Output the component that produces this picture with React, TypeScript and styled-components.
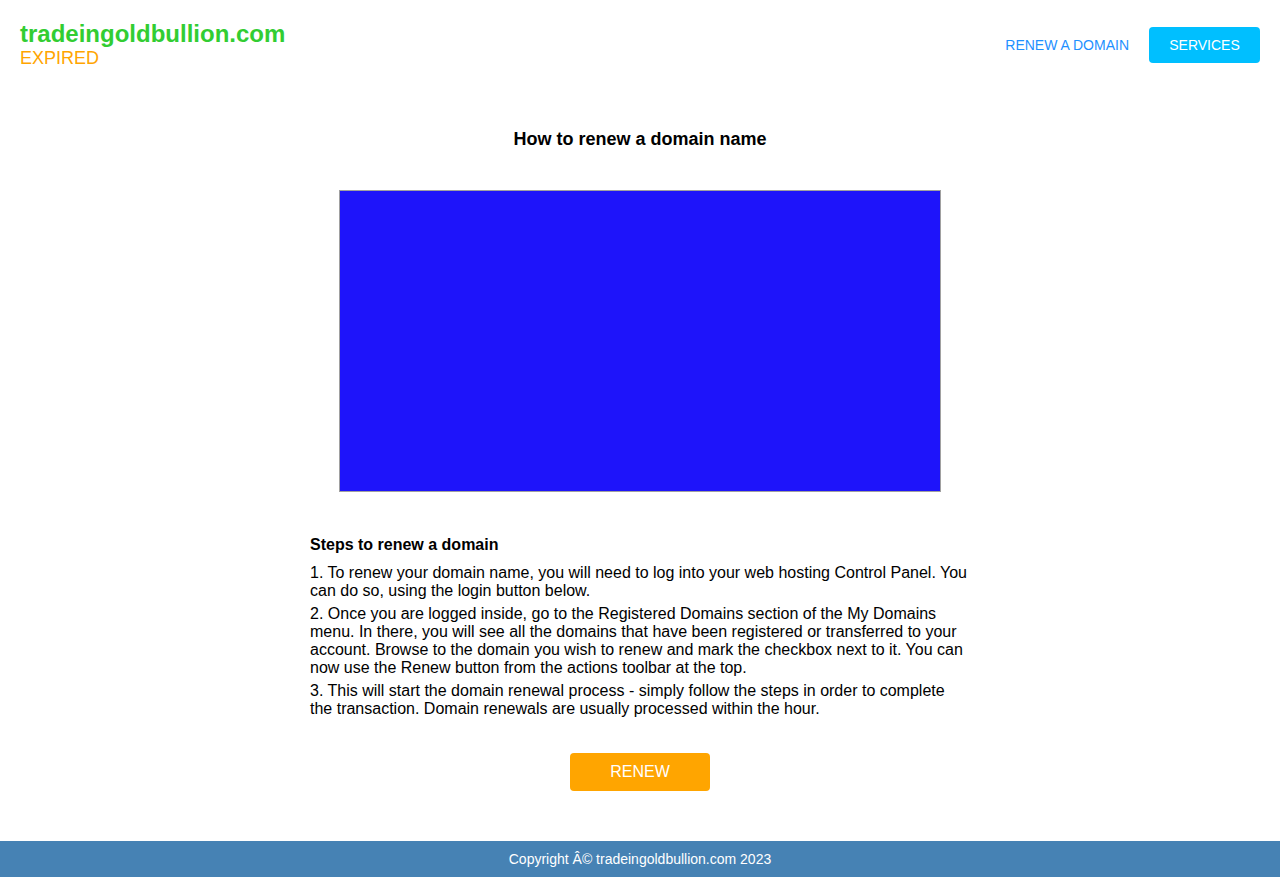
import React from "react";
import styled, { createGlobalStyle } from "styled-components";

const Global = createGlobalStyle`
  html, body { margin: 0; padding: 0; background: #fff; }
  body { font-family: "Liberation Sans", Arial, sans-serif; color: #000; }
`;

const Page = styled.div`
  min-height: 877px;
  display: flex;
  flex-direction: column;
`;

const Header = styled.header`
  display: flex;
  justify-content: space-between;
  align-items: center;
  padding: 20px 20px 21px 20px;
`;

const Brand = styled.div`
  display: flex;
  flex-direction: column;
`;

const Domain = styled.div`
  font-size: 24px;
  font-weight: bold;
  color: #32cd32;
  line-height: 28px;
`;

const Status = styled.div`
  font-size: 18px;
  color: #ffa500;
  line-height: 20px;
`;

const Nav = styled.nav`
  display: flex;
  align-items: center;
  gap: 20px;
  padding-top: 2px;
`;

const NavLink = styled.a`
  font-size: 14px;
  color: #1e90ff;
  text-decoration: none;
`;

const NavButton = styled.a`
  font-size: 14px;
  color: #fff;
  background: #00bfff;
  border-radius: 4px;
  width: 111px;
  height: 36px;
  display: flex;
  align-items: center;
  justify-content: center;
  text-decoration: none;
`;

const Main = styled.main`
  flex: 1;
  display: flex;
  flex-direction: column;
  align-items: center;
`;

const Title = styled.h2`
  font-size: 18px;
  font-weight: bold;
  margin: 40px 0 0 0;
  line-height: 21px;
`;

const Video = styled.div`
  width: 600px;
  height: 300px;
  margin-top: 40px;
  background: #1e14fa;
  border: 1px solid #a0a0a0;
`;

const Steps = styled.section`
  width: 660px;
  margin-top: 44px;
`;

const StepsTitle = styled.h3`
  font-size: 16px;
  font-weight: bold;
  margin: 0 0 10px 0;
  line-height: 18px;
`;

const Step = styled.p`
  font-size: 16px;
  line-height: 18px;
  margin: 0 0 5px 0;
`;

const RenewButton = styled.a`
  margin-top: 30px;
  width: 140px;
  height: 38px;
  background: #ffa500;
  color: #fff;
  border-radius: 4px;
  font-size: 16px;
  display: flex;
  align-items: center;
  justify-content: center;
  text-decoration: none;
  margin-bottom: 50px;
`;

const Footer = styled.footer`
  height: 36px;
  background: #4682b4;
  color: #fff;
  font-size: 14px;
  display: flex;
  align-items: center;
  justify-content: center;
`;

export default function App() {
  return (
    <Page>
      <Global />
      <Header>
        <Brand>
          <Domain>tradeingoldbullion.com</Domain>
          <Status>EXPIRED</Status>
        </Brand>
        <Nav>
          <NavLink href="#">RENEW A DOMAIN</NavLink>
          <NavButton href="#">SERVICES</NavButton>
        </Nav>
      </Header>
      <Main>
        <Title>How to renew a domain name</Title>
        <Video />
        <Steps>
          <StepsTitle>Steps to renew a domain</StepsTitle>
          <Step>
            1. To renew your domain name, you will need to log into your web hosting Control Panel. You can do so, using the login button below.
          </Step>
          <Step>
            2. Once you are logged inside, go to the Registered Domains section of the My Domains menu. In there, you will see all the domains that have been registered or transferred to your account. Browse to the domain you wish to renew and mark the checkbox next to it. You can now use the Renew button from the actions toolbar at the top.
          </Step>
          <Step>
            3. This will start the domain renewal process - simply follow the steps in order to complete the transaction. Domain renewals are usually processed within the hour.
          </Step>
        </Steps>
        <RenewButton href="#">RENEW</RenewButton>
      </Main>
      <Footer>Copyright Â© tradeingoldbullion.com 2023</Footer>
    </Page>
  );
}
